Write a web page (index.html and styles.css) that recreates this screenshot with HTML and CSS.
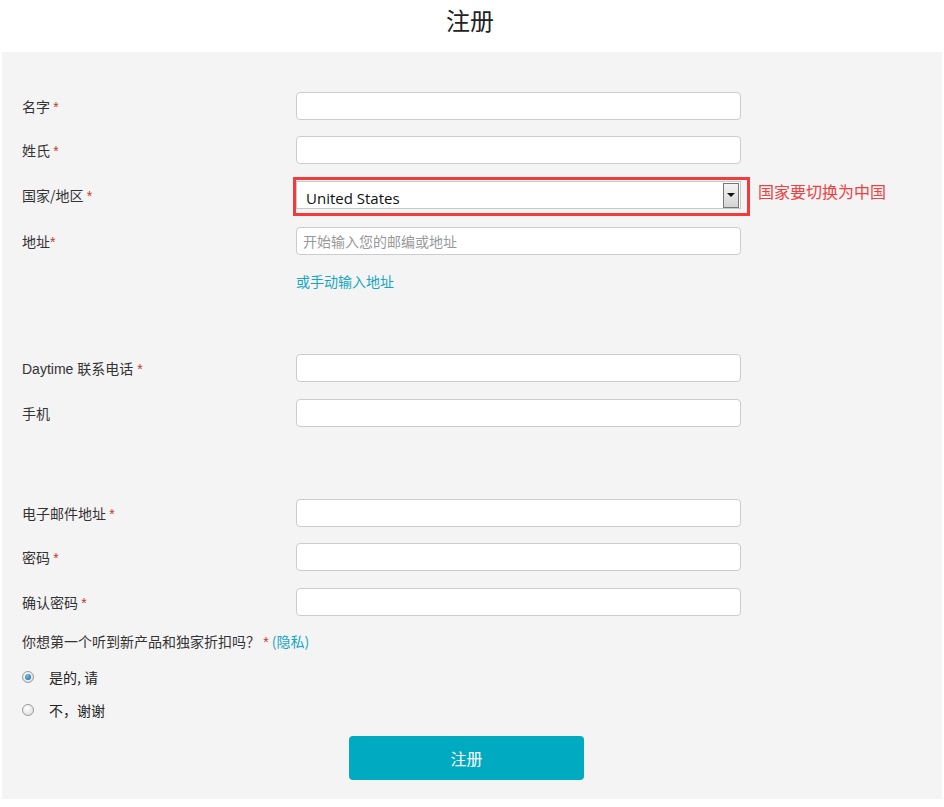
FILE: index.html
```html
<!DOCTYPE html>
<html lang="zh-CN">
<head>
    <meta charset="UTF-8">
    <meta name="viewport" content="width=device-width, initial-scale=1.0">
    <title>注册</title>
    <link rel="stylesheet" href="styles.css">
</head>
<body>
    <h1 class="page-title">注册</h1>

    <form class="register-panel" onsubmit="return false">
        <div class="form-row first">
            <label>名字 <span class="req">*</span></label>
            <input type="text" class="text-input">
        </div>
        <div class="form-row">
            <label>姓氏 <span class="req">*</span></label>
            <input type="text" class="text-input">
        </div>
        <div class="form-row country-row">
            <label>国家/地区 <span class="req">*</span></label>
            <div class="select-wrap">
                <div class="fake-select">
                    <span class="select-value">United States</span>
                    <span class="select-arrow"></span>
                </div>
                <span class="note">国家要切换为中国</span>
            </div>
        </div>
        <div class="form-row address-row">
            <label>地址<span class="req">*</span></label>
            <input type="text" class="text-input" placeholder="开始输入您的邮编或地址">
        </div>
        <div class="manual-link">
            <a href="#">或手动输入地址</a>
        </div>

        <div class="form-row phone-row">
            <label class="latin">Daytime 联系电话 <span class="req">*</span></label>
            <input type="text" class="text-input">
        </div>
        <div class="form-row loose">
            <label>手机</label>
            <input type="text" class="text-input">
        </div>

        <div class="form-row email-row">
            <label>电子邮件地址 <span class="req">*</span></label>
            <input type="text" class="text-input">
        </div>
        <div class="form-row">
            <label>密码 <span class="req">*</span></label>
            <input type="password" class="text-input">
        </div>
        <div class="form-row loose">
            <label>确认密码 <span class="req">*</span></label>
            <input type="password" class="text-input">
        </div>

        <p class="question">你想第一个听到新产品和独家折扣吗？ <span class="req">*</span> <a href="#">(隐私)</a></p>

        <label class="radio-line first-radio">
            <input type="radio" name="news" checked>
            <span>是的, 请</span>
        </label>
        <label class="radio-line">
            <input type="radio" name="news">
            <span>不，谢谢</span>
        </label>

        <button type="submit" class="submit-btn">注册</button>
    </form>
</body>
</html>
```

FILE: styles.css
```css
body {
    margin: 0;
    font-family: "Noto Sans CJK SC", "Liberation Sans", sans-serif;
    color: #333;
    background: #fff;
}
.page-title {
    margin: 0;
    height: 52px;
    line-height: 40px;
    font-size: 24px;
    font-weight: normal;
    text-align: center;
    color: #222;
    padding-right: 4px;
}
.register-panel {
    margin: 0 2px;
    padding: 40px 20px 19px;
    background-color: #f4f4f4;
}
.form-row {
    display: grid;
    grid-template-columns: 274px 445px;
    align-items: center;
    height: 28px;
    margin-top: 16px;
}
.form-row.first {
    margin-top: 0;
}
.form-row.loose {
    margin-top: 17px;
}
.form-row label {
    font-size: 14px;
    color: #333;
}
.form-row label.latin {
    font-family: "Liberation Sans", "Noto Sans CJK SC", sans-serif;
}
.req {
    color: #c0392b;
    font-family: "Liberation Sans", sans-serif;
}
.text-input {
    box-sizing: border-box;
    height: 28px;
    width: 445px;
    border: 1px solid #ccc;
    border-radius: 4px;
    background: #fff;
    padding: 0 6px;
    font-size: 14px;
    font-family: "Noto Sans CJK SC", sans-serif;
}
.text-input::placeholder {
    color: #999;
}
.country-row {
    margin-top: 17px;
}
.address-row {
    margin-top: 18px;
}
.select-wrap {
    position: relative;
}
.select-wrap::before {
    content: "";
    position: absolute;
    left: -3px;
    top: -4px;
    width: 451px;
    height: 33px;
    border: 3px solid #f43b3b;
    pointer-events: none;
}
.fake-select {
    box-sizing: border-box;
    height: 28px;
    width: 445px;
    background: #fff;
    border: 1px solid #c8c8c8;
    display: flex;
    align-items: center;
    justify-content: space-between;
    padding: 1px 1px 1px 9px;
}
.select-value {
    font-family: "Open Sans", "Liberation Sans", sans-serif;
    font-size: 15px;
    color: #111;
    padding-top: 5px;
}
.select-arrow {
    position: relative;
    width: 14px;
    height: 23px;
    border: 1px solid #777;
    background: linear-gradient(#f4f4f4, #d4d4d4);
}
.select-arrow::after {
    content: "";
    position: absolute;
    left: 3px;
    top: 9px;
    border-left: 4px solid transparent;
    border-right: 4px solid transparent;
    border-top: 4px solid #111;
}
.note {
    position: absolute;
    left: 462px;
    top: -2px;
    white-space: nowrap;
    font-size: 16px;
    color: #f04040;
}
.manual-link {
    margin: 16px 0 0 274px;
    line-height: 20px;
    font-size: 14px;
}
a {
    color: #17a5c2;
    text-decoration: none;
}
.phone-row {
    margin-top: 63px;
}
.email-row {
    margin-top: 72px;
}
.question {
    margin: 15px 0 0;
    line-height: 20px;
    font-size: 14px;
}
.radio-line {
    display: flex;
    align-items: center;
    height: 24px;
    margin-top: 9px;
    font-size: 14px;
    color: #222;
}
.radio-line.first-radio {
    margin-top: 13px;
}
.radio-line input {
    appearance: none;
    margin: 0 15px 0 0;
    width: 12px;
    height: 12px;
    border-radius: 50%;
    border: 1px solid #9a9a9a;
    background: radial-gradient(circle at 40% 35%, #fff, #d8d8d8);
    box-sizing: border-box;
    position: relative;
}
.radio-line input:checked::after {
    content: "";
    position: absolute;
    left: 2px;
    top: 2px;
    width: 6px;
    height: 6px;
    border-radius: 50%;
    background: radial-gradient(circle at 40% 35%, #6fc3ef, #115a8f);
}
.submit-btn {
    display: block;
    margin: 14px 0 0 327px;
    width: 235px;
    height: 44px;
    border: none;
    border-radius: 4px;
    background-color: #00aac1;
    color: #fff;
    font-size: 16px;
    font-family: "Noto Sans CJK SC", sans-serif;
    cursor: pointer;
}
```
